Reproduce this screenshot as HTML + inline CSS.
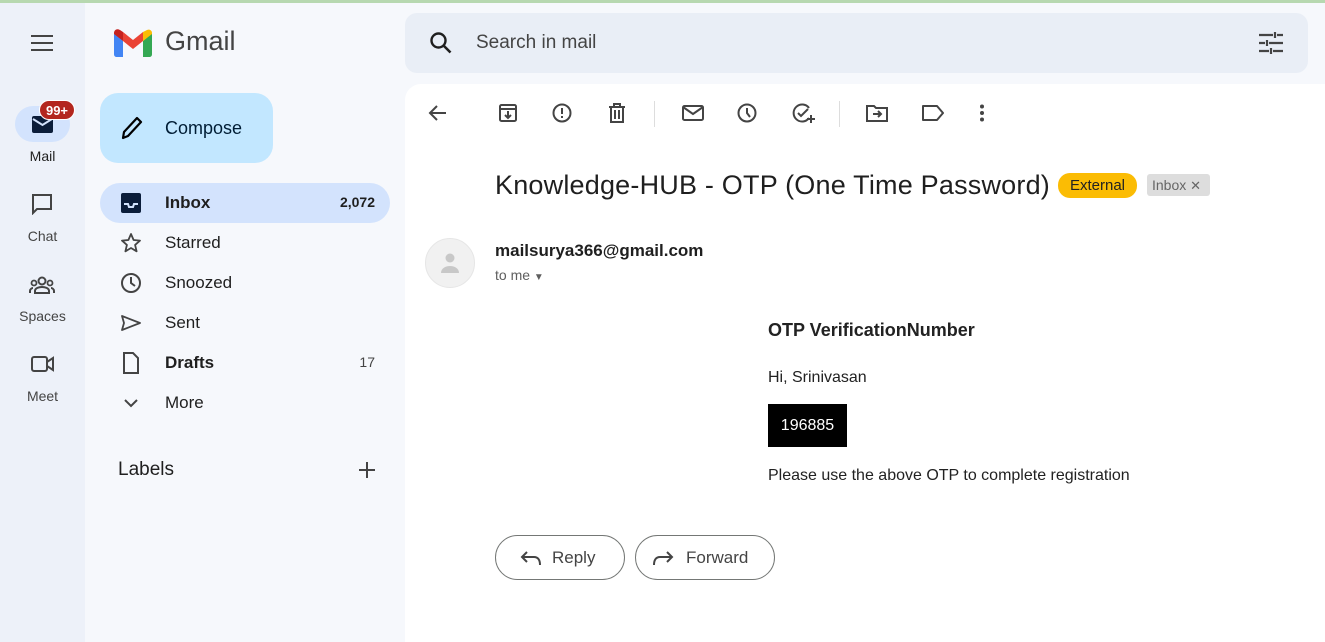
<!DOCTYPE html>
<html><head><meta charset="utf-8"><style>
*{box-sizing:border-box;margin:0;padding:0}
body{width:1325px;height:642px;overflow:hidden;background:#f6f8fc;font-family:"Liberation Sans",Arial,sans-serif;color:#1f1f1f;position:relative}
.abs{position:absolute}
.topline{left:0;top:0;width:1325px;height:3px;background:#b7d8b0}
.rail{left:0;top:3px;width:85px;height:639px;background:#edf1f9}
.railitem{position:absolute;left:0;width:85px;text-align:center;font-size:14px;color:#444}
.search{left:405px;top:13px;width:903px;height:60px;background:#e9eef6;border-radius:12px}
.main{left:405px;top:84px;width:920px;height:558px;background:#fff;border-radius:16px 0 0 0}
.nav{position:absolute;left:100px;width:290px;height:40px;border-radius:20px;font-size:17px;color:#1f1f1f}
.nav span.t{position:absolute;left:65px;top:10px}
.nav svg{position:absolute;left:20px;top:9px}
.nav .c{position:absolute;right:15px;top:11px;font-size:14px}
.btn{position:absolute;top:535px;height:45px;border:1px solid #747775;border-radius:23px;font-size:17px;color:#444}
</style></head><body>
<div class="abs topline"></div>
<div class="abs rail"></div>
<svg class="abs" style="left:30px;top:32px" width="24" height="22" viewBox="0 0 24 22"><path d="M1 4h22M1 11h22M1 18h22" stroke="#444" stroke-width="2"/></svg>
<div class="abs" style="left:15px;top:106px;width:55px;height:36px;border-radius:18px;background:#d3e3fd"></div>
<svg class="abs" style="left:31px;top:115px" width="24" height="20" viewBox="0 0 24 20"><rect x="1" y="1" width="21" height="17" rx="2" fill="#0b1d3a"/><path d="M2 4l9.5 6L21 4" stroke="#d3e3fd" stroke-width="2" fill="none"/></svg>
<div class="abs" style="left:39px;top:100px;width:36px;height:20px;border-radius:10px;background:#b3261e;color:#fff;font-size:13px;font-weight:bold;text-align:center;line-height:20px;border:1px solid #fff">99+</div>
<div class="railitem" style="top:148px;color:#1f1f1f">Mail</div>
<svg class="abs" style="left:31px;top:193px" width="22" height="22" viewBox="0 0 22 22"><path d="M2 2h18v14H6l-4 4z" stroke="#444" stroke-width="2" fill="none"/></svg>
<div class="railitem" style="top:228px">Chat</div>
<svg class="abs" style="left:29px;top:275px" width="26" height="20" viewBox="0 0 26 20"><circle cx="13" cy="6" r="3.5" stroke="#444" stroke-width="2" fill="none"/><circle cx="5" cy="8" r="2.5" stroke="#444" stroke-width="1.8" fill="none"/><circle cx="21" cy="8" r="2.5" stroke="#444" stroke-width="1.8" fill="none"/><path d="M6 18v-2c0-3 4-4 7-4s7 1 7 4v2zM1 18v-2c0-2 2-3 3-3M25 18v-2c0-2-2-3-3-3" stroke="#444" stroke-width="2" fill="none"/></svg>
<div class="railitem" style="top:308px">Spaces</div>
<svg class="abs" style="left:31px;top:355px" width="24" height="18" viewBox="0 0 24 18"><rect x="1" y="2" width="15" height="14" rx="2" stroke="#444" stroke-width="2" fill="none"/><path d="M16 7l6-4v12l-6-4" stroke="#444" stroke-width="2" fill="none"/></svg>
<div class="railitem" style="top:388px">Meet</div>

<svg class="abs" style="left:114px;top:29px" width="38" height="28" viewBox="0 0 38 28"><path d="M0 4v21c0 2 1 3 3 3h6V12z" fill="#4285f4"/><path d="M29 28h6c2 0 3-1 3-3V4l-9 8z" fill="#34a853"/><path d="M29 3v9l9-7V4c0-3-3-4-5-3z" fill="#fbbc04"/><path d="M9 12V3l10 8 10-8v9l-10 8z" fill="#ea4335"/><path d="M0 4v1l9 7V3L6 1C3-1 0 1 0 4z" fill="#c5221f"/></svg>
<div class="abs" style="left:165px;top:26px;font-size:27px;color:#444">Gmail</div>
<div class="abs" style="left:100px;top:93px;width:173px;height:70px;border-radius:18px;background:#c2e7ff"></div>
<svg class="abs" style="left:120px;top:115px" width="24" height="26" viewBox="0 0 24 26"><path d="M3 23l1-6L17 3l4 4L8 21z" stroke="#000" stroke-width="2.2" fill="none" stroke-linejoin="round"/></svg>
<div class="abs" style="left:165px;top:118px;font-size:18px;color:#001d35">Compose</div>

<div class="nav" style="top:183px;background:#d3e3fd;font-weight:bold"><svg width="22" height="22" viewBox="0 0 22 22"><rect x="1" y="1" width="20" height="20" rx="2" fill="#0b1d3a"/><path d="M4 12h4l1 3h4l1-3h4" stroke="#d3e3fd" stroke-width="2" fill="none"/></svg><span class="t">Inbox</span><span class="c">2,072</span></div>
<div class="nav" style="top:223px"><svg width="22" height="22" viewBox="0 0 22 22"><path d="M11 2l2.6 6 6.4.6-4.9 4.3 1.5 6.4L11 16l-5.6 3.3 1.5-6.4L2 8.6 8.4 8z" stroke="#444" stroke-width="1.8" fill="none" stroke-linejoin="round"/></svg><span class="t">Starred</span></div>
<div class="nav" style="top:263px"><svg width="22" height="22" viewBox="0 0 22 22"><circle cx="11" cy="11" r="9" stroke="#444" stroke-width="2" fill="none"/><path d="M11 5v6l4 3" stroke="#444" stroke-width="2" fill="none"/></svg><span class="t">Snoozed</span></div>
<div class="nav" style="top:303px"><svg width="22" height="22" viewBox="0 0 22 22"><path d="M2 4l18 7-18 7 2-7z" stroke="#444" stroke-width="1.8" fill="none" stroke-linejoin="round"/></svg><span class="t">Sent</span></div>
<div class="nav" style="top:343px;font-weight:bold"><svg width="22" height="22" viewBox="0 0 22 22"><path d="M4 1h9l5 5v15H4z" stroke="#444" stroke-width="2" fill="none"/></svg><span class="t">Drafts</span><span class="c" style="font-weight:normal;color:#444">17</span></div>
<div class="nav" style="top:383px"><svg width="22" height="22" viewBox="0 0 22 22"><path d="M5 8l6 6 6-6" stroke="#444" stroke-width="2" fill="none"/></svg><span class="t">More</span></div>
<div class="abs" style="left:118px;top:459px;font-size:19px">Labels</div>
<svg class="abs" style="left:358px;top:461px" width="18" height="18" viewBox="0 0 18 18"><path d="M9 1v16M1 9h16" stroke="#444" stroke-width="2"/></svg>

<div class="abs search"></div>
<svg class="abs" style="left:429px;top:31px" width="24" height="24" viewBox="0 0 24 24"><circle cx="9.5" cy="9.5" r="7" stroke="#1f1f1f" stroke-width="2.4" fill="none"/><path d="M14.5 14.5l7 7" stroke="#1f1f1f" stroke-width="2.6"/></svg>
<div class="abs" style="left:476px;top:32px;font-size:19px;color:#444">Search in mail</div>
<svg class="abs" style="left:1258px;top:31px" width="26" height="24" viewBox="0 0 26 24"><path d="M1 4h14M19 4h6M1 12h6M11 12h14M1 20h10M15 20h10M17 1v6M9 9v6M13 17v6" stroke="#444" stroke-width="2.2"/></svg>

<div class="abs main"></div>
<svg class="abs" style="left:428px;top:104px" width="20" height="18" viewBox="0 0 20 18"><path d="M18 9H3M9 2L2 9l7 7" stroke="#444" stroke-width="2" fill="none"/></svg>
<svg class="abs" style="left:498px;top:103px" width="20" height="20" viewBox="0 0 20 20"><rect x="2" y="2" width="16" height="16" rx="1.5" stroke="#444" stroke-width="2" fill="none"/><path d="M2 6h16M10 8v7M7 12l3 3 3-3" stroke="#444" stroke-width="2" fill="none"/></svg>
<svg class="abs" style="left:552px;top:103px" width="20" height="20" viewBox="0 0 20 20"><circle cx="10" cy="10" r="8.5" stroke="#444" stroke-width="2" fill="none"/><path d="M10 5v6M10 13v2" stroke="#444" stroke-width="2"/></svg>
<svg class="abs" style="left:608px;top:103px" width="18" height="20" viewBox="0 0 18 20"><path d="M1 4h16M6 4V1h6v3M3 4v15h12V4M7 7v9M11 7v9" stroke="#444" stroke-width="2" fill="none"/></svg>
<div class="abs" style="left:654px;top:101px;width:1px;height:26px;background:#ddd"></div>
<svg class="abs" style="left:682px;top:105px" width="22" height="16" viewBox="0 0 22 16"><rect x="1" y="1" width="20" height="14" rx="1.5" stroke="#444" stroke-width="2" fill="none"/><path d="M1 2l10 7 10-7" stroke="#444" stroke-width="2" fill="none"/></svg>
<svg class="abs" style="left:737px;top:103px" width="20" height="20" viewBox="0 0 20 20"><circle cx="10" cy="10" r="8.5" stroke="#444" stroke-width="2" fill="none"/><path d="M10 5v5l3 4" stroke="#444" stroke-width="2" fill="none"/></svg>
<svg class="abs" style="left:792px;top:102px" width="24" height="22" viewBox="0 0 24 22"><path d="M17 6a8.5 8.5 0 1 0 0 10" stroke="#444" stroke-width="2" fill="none"/><path d="M6 11l3 3 7-7M19 13v8M15 17h8" stroke="#444" stroke-width="2" fill="none"/></svg>
<div class="abs" style="left:839px;top:101px;width:1px;height:26px;background:#ddd"></div>
<svg class="abs" style="left:866px;top:104px" width="22" height="18" viewBox="0 0 22 18"><path d="M1 2h7l2 2h11v13H1z" stroke="#444" stroke-width="2" fill="none"/><path d="M7 10h8M12 7l3 3-3 3" stroke="#444" stroke-width="2" fill="none"/></svg>
<svg class="abs" style="left:922px;top:105px" width="22" height="16" viewBox="0 0 22 16"><path d="M1 1h14l6 7-6 7H1z" stroke="#444" stroke-width="2" fill="none" stroke-linejoin="round"/></svg>
<svg class="abs" style="left:979px;top:104px" width="6" height="18" viewBox="0 0 6 18"><circle cx="3" cy="2.5" r="2" fill="#444"/><circle cx="3" cy="9" r="2" fill="#444"/><circle cx="3" cy="15.5" r="2" fill="#444"/></svg>

<div class="abs" style="left:495px;top:170px;font-size:27px;color:#1f1f1f;letter-spacing:0.2px">Knowledge-HUB - OTP (One Time Password)</div>
<div class="abs" style="left:1058px;top:173px;width:79px;height:25px;border-radius:12px;background:#fbbc04;font-size:15px;text-align:center;line-height:25px;color:#222">External</div>
<div class="abs" style="left:1147px;top:174px;width:63px;height:22px;border-radius:3px;background:#ddd;font-size:14px;line-height:22px;padding-left:5px;color:#666">Inbox <span style="font-size:13px">✕</span></div>

<div class="abs" style="left:425px;top:238px;width:50px;height:50px;border-radius:50%;background:#f1f1f1;border:1px solid #e6e6e6"></div>
<svg class="abs" style="left:439px;top:251px" width="22" height="24" viewBox="0 0 22 24"><circle cx="11" cy="7" r="4.5" fill="#c8c8c8"/><path d="M2 22c0-5 5-7 9-7s9 2 9 7z" fill="#c8c8c8"/></svg>
<div class="abs" style="left:495px;top:241px;font-size:17px;font-weight:bold;color:#1f1f1f">mailsurya366@gmail.com</div>
<div class="abs" style="left:495px;top:267px;font-size:14px;color:#5e5e5e">to me <span style="font-size:10px">▼</span></div>

<div class="abs" style="left:768px;top:320px;font-size:18px;font-weight:bold;color:#222">OTP VerificationNumber</div>
<div class="abs" style="left:768px;top:369px;font-size:16px;color:#222">Hi, Srinivasan</div>
<div class="abs" style="left:768px;top:404px;width:79px;height:43px;background:#000;color:#fff;font-size:16px;text-align:center;line-height:43px">196885</div>
<div class="abs" style="left:768px;top:467px;font-size:16px;color:#222">Please use the above OTP to complete registration</div>

<div class="btn" style="left:495px;width:130px"><svg class="abs" style="left:24px;top:14px" width="22" height="16" viewBox="0 0 22 16"><path d="M7 2L2 7l5 5M2 7h12c4 0 6 3 6 8" stroke="#444" stroke-width="2" fill="none"/></svg><span class="abs" style="left:56px;top:12px">Reply</span></div>
<div class="btn" style="left:635px;width:140px"><svg class="abs" style="left:16px;top:14px" width="22" height="16" viewBox="0 0 22 16"><path d="M15 2l5 5-5 5M20 7H8c-4 0-6 3-6 8" stroke="#444" stroke-width="2" fill="none"/></svg><span class="abs" style="left:50px;top:12px">Forward</span></div>
</body></html>
